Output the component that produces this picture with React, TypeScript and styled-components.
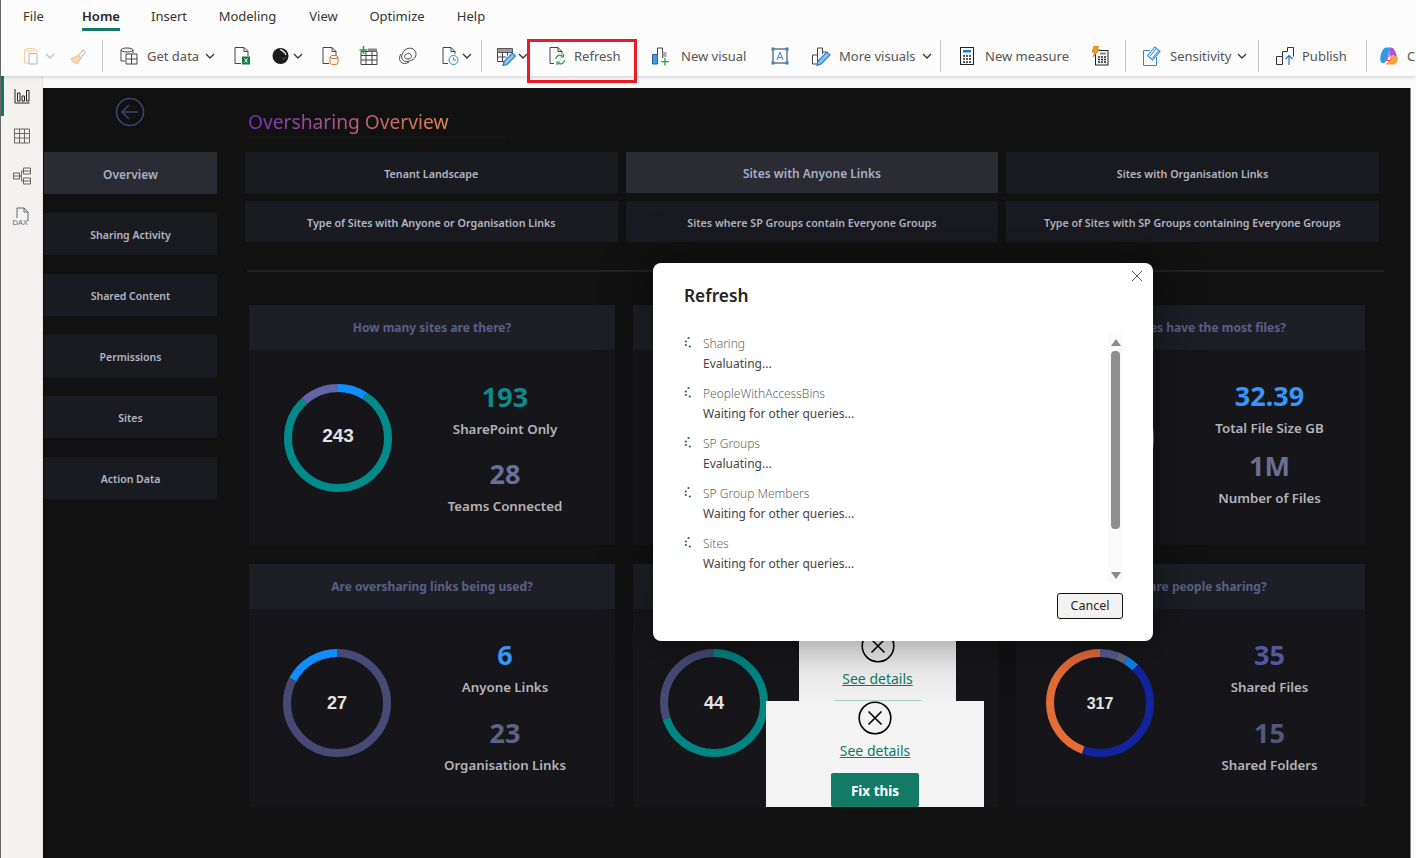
import React from "react";
import styled, { createGlobalStyle } from "styled-components";

const GlobalStyle = createGlobalStyle`
    html, body {
        margin: 0;
        padding: 0;
        background: #fafafa;
        font-family: "Noto Sans", "Open Sans", sans-serif;
    }
`;

/* ---------- ribbon icons ---------- */

const Icon = styled.svg.attrs({ viewBox: "0 0 20 20", fill: "none" })`
    width: 20px;
    height: 20px;
    flex: none;
    stroke: #444;
    stroke-width: 1;
`;

const Chevron = () => (
    <ChevronSvg viewBox="0 0 10 6">
        <path d="M1 1l4 4 4-4" fill="none" stroke="#333" strokeWidth="1.3" />
    </ChevronSvg>
);

const PasteIcon = () => (
    <Icon>
        <path d="M5 4H2.5v13H6M12 4h2.5v2M5 2.5h7V5H5z" stroke="#f2cfa3" />
        <path d="M7 7.5h8v10.5H7z" stroke="#b5b5b5" />
    </Icon>
);
const BrushIcon = () => (
    <Icon>
        <path d="M10 10l5-6 2.5 2-5 6z" stroke="#aaa" />
        <path d="M10 9.5L3 13c1.5 2.5 4 4.5 6 5l4-5.5z" fill="#f6d9b5" stroke="#e9b987" />
    </Icon>
);
const GetDataIcon = () => (
    <Icon>
        <ellipse cx="8" cy="4" rx="6" ry="2" />
        <path d="M2 4v11h4M14 4v3" />
        <path d="M7 8h11v10H7zM7 13h11M12.5 8v10" />
    </Icon>
);
const ExcelIcon = () => (
    <Icon>
        <path d="M3 1.5h9l4 4V10M12 1.5v4h4M3 1.5v16h6" />
        <rect x="10" y="10.5" width="8" height="8" fill="#107c41" stroke="none" />
        <path d="M12.5 12.5l3 4M15.5 12.5l-3 4" stroke="#fff" />
    </Icon>
);
const OneLakeIcon = () => (
    <Icon>
        <circle cx="9.5" cy="10" r="8" fill="#1c1c1c" stroke="none" />
        <path d="M9 3.5c3 .5 5.500 2.500 6 5.500-1.500-2.500-3.500-4-6-5.500z" fill="#fff" stroke="#fff" strokeWidth="0.8" />
        <path d="M11 13c1.500 0 3-.5 4-2" stroke="#777" strokeWidth="0.8" />
    </Icon>
);
const SqlIcon = () => (
    <Icon>
        <path d="M3 1.5h9l4 4V9M12 1.5v4h4M3 1.5v16h6" />
        <ellipse cx="14" cy="11" rx="4" ry="1.6" stroke="#d8731f" />
        <path d="M10 11v6c0 2 8 2 8 0v-6" stroke="#d8731f" />
    </Icon>
);
const EnterDataIcon = () => (
    <Icon>
        <path d="M2 5.5h16v13H2zM2 9.5h16M2 14h16M7 5.5v13M13 5.5v13" />
        <path d="M9 2.5h9v3H9z" fill="#888" stroke="none" />
        <path d="M4.5 0v8M0.5 4h8" stroke="#2e9a4e" strokeWidth="1.6" />
    </Icon>
);
const DataverseIcon = () => (
    <Icon>
        <path d="M7 4c4-3 8-2 10 1s1 7-3 9-7 2-9 0-2-6 2-10z" />
        <path d="M3 8c-2 3-2 6 0 8s5 2 8 0M7 9c2-2 5-2 6 0s0 4-3 4-4-2-3-4z" />
    </Icon>
);
const RecentIcon = () => (
    <Icon>
        <path d="M3 1.5h8l4 4V8M11 1.5v4h4M3 1.5v16h5" />
        <circle cx="13.5" cy="14" r="4.5" stroke="#2b88d8" />
        <path d="M13.5 11.5V14H16" stroke="#2b88d8" />
    </Icon>
);
const TransformIcon = () => (
    <Icon>
        <path d="M1.5 2.5h15v4h-15z" fill="#999" stroke="#555" />
        <path d="M1.5 6.5v9H8M1.5 11h9M6.5 6.5v9M11.5 6.5v3M16.5 6.5v1" />
        <path d="M7 19.5l1-4 8.5-8.5 3 3-8.5 8.5z" fill="#8cc4ee" stroke="#1f78c8" strokeWidth="1.1" />
    </Icon>
);
const RefreshIcon = () => (
    <Icon>
        <path d="M3 1.5h8l4 4V8M11 1.5v4h4M3 1.5v16h4" />
        <path d="M9 13a4 4 0 0 1 7-2.5M17.5 14a4 4 0 0 1-7 2.5" stroke="#2e9a4e" strokeWidth="1.2" />
        <path d="M16.5 8v3h-3M10 19v-3h3" stroke="#2e9a4e" strokeWidth="1.2" />
    </Icon>
);
const NewVisualIcon = () => (
    <Icon>
        <path d="M6.5 18V2h5v10" stroke="#444" />
        <path d="M11.5 6h4v5h-4z" fill="#aaa" stroke="none" />
        <path d="M1.5 8.5h5V18h-5z" fill="#4a9be0" stroke="#1f5fa8" />
        <path d="M14 12v7.5M10.3 15.7h7.5" stroke="#2e9a4e" strokeWidth="1.3" />
    </Icon>
);
const TextBoxIcon = () => (
    <Icon>
        <path d="M3 3h14v14H3z" stroke="#333" />
        <path d="M1.5 1.5h3v3h-3zM15.5 1.5h3v3h-3zM1.5 15.5h3v3h-3zM15.5 15.5h3v3h-3z" fill="#2b88d8" stroke="none" />
        <path d="M7 14l3-8 3 8M8 11.5h4" stroke="#2b88d8" />
    </Icon>
);
const MoreVisualsIcon = () => (
    <Icon>
        <path d="M1.5 9h5v9h-5zM6.5 9V2h5v6M11.5 6h4v3" />
        <path d="M6 19.5l1-4.5 9-9 3 3-9 9z" fill="#8cc4ee" stroke="#1f78c8" strokeWidth="1.1" />
    </Icon>
);
const CalcIcon = () => (
    <Icon>
        <rect x="3.5" y="1.5" width="13" height="17" stroke="#222" />
        <path d="M6 4h8v2.5H6z" fill="#1f78c8" stroke="none" />
        <path d="M6 10h2M9 10h2M12 10h2M6 13h2M9 13h2M12 13h2M6 16h2M9 16h2M12 16h2" stroke="#222" strokeWidth="1.6" />
    </Icon>
);
const QuickMeasureIcon = () => (
    <Icon>
        <rect x="5.5" y="4.5" width="12.5" height="14.5" stroke="#222" />
        <path d="M10 6.5h6v2h-6z" fill="#888" stroke="none" />
        <path d="M8 11h2M11 11h2M14 11h2M8 13.5h2M11 13.5h2M14 13.5h2M8 16h2M11 16h2M14 16h2" stroke="#222" strokeWidth="1.5" />
        <path d="M4 0h5L7 3.500h3L3 11l1.500-5H2z" fill="#f09a28" stroke="#c8701a" strokeWidth="0.6" />
    </Icon>
);
const SensitivityIcon = () => (
    <Icon>
        <path d="M1.5 4.5H8M1.5 4.5v15h13V11" stroke="#2b88d8" />
        <path d="M5.5 9.5L13 1l5 4.5-7.5 8.5z" fill="#fff" stroke="#2b88d8" strokeWidth="1.1" />
        <path d="M8 10l6-7M10.5 12l6-7" stroke="#2b88d8" strokeWidth="1.1" />
    </Icon>
);
const PublishIcon = () => (
    <Icon>
        <path d="M1.5 10.5h6v8h-6zM7.500 10.500V5.500h5M12.500 5.500v-4h6v9" stroke="#333" />
        <path d="M14 19v-9M10.500 13l3.500-3.500 3.500 3.500" stroke="#1f78c8" strokeWidth="1.2" />
    </Icon>
);
const CopilotIcon = () => (
    <Icon>
        <path d="M7 1.5h5L8 13c-.8 2.500-2 4-4 4-1 0-2-.5-2.500-2-.7-3 .5-8 2-10.500C4.500 2.500 5.500 1.500 7 1.500z" fill="#2f9be8" stroke="none" />
        <path d="M11.5 1.5c2 0 3.500 1 4.500 3.500l2.500 7c-1-1.500-2.500-2.500-4.500-2.500H10z" fill="#b14fd8" stroke="none" />
        <path d="M18.5 11c.8 3-.5 7-3.500 7.500H6c1.500-.5 2.500-1.800 3-3.500l1-3c1.500 0 3-.5 3.500-2 2 0 3.500-.5 5 1z" fill="#f6a53a" stroke="none" />
        <path d="M8 9.5h5L11 15H6.500z" fill="#e9487f" stroke="none" />
        <path d="M9.5 10.5H12l-1.300 3.500H8.200z" fill="#fff" stroke="none" />
    </Icon>
);

/* ---------- left rail icons ---------- */

const ReportIcon = () => (
    <Icon>
        <path d="M3 3v14h14.5M5.5 7v8H8V7zM10 10v5h2.5v-5zM14.5 4.5V15H17V4.500z" stroke="#222" />
    </Icon>
);
const TableIcon = () => (
    <Icon>
        <path d="M2.5 3h15v14h-15zM2.500 7.500h15M2.500 12h15M7.500 3v14M12.500 3v14" stroke="#666" />
    </Icon>
);
const ModelIcon = () => (
    <Icon>
        <path d="M1.5 7h6v6h-6zM1.500 10h6M11.500 2h7v6h-7zM11.500 5h7M11.500 12h7v6h-7zM11.500 15h7M7.500 10h2M9.500 5v10M9.500 5h2M9.500 15h2" stroke="#666" />
    </Icon>
);
const DaxIcon = () => (
    <Icon>
        <path d="M5 12V2h7l4 4v9M12 2v4h4" stroke="#666" />
        <text x="0.5" y="18.5" fontSize="7.5" fill="#666" stroke="none" fontFamily="Liberation Sans">DAX</text>
    </Icon>
);

/* ---------- donut ---------- */

type Segment = { size: number; color: string };

function Donut({ total, segments, size = 18, y = 60 }: { total: number; segments: Segment[]; size?: number; y?: number }) {
    let start = 0;
    return (
        <RingSvg viewBox="0 0 108 108">
            <g transform="rotate(-90 54 54)">
                {segments.map((s) => {
                    const arc = (
                        <circle
                            key={s.color}
                            cx="54"
                            cy="54"
                            r="50"
                            fill="none"
                            stroke={s.color}
                            strokeWidth="8"
                            pathLength={100}
                            strokeDasharray={`${s.size} ${100 - s.size}`}
                            strokeDashoffset={-start}
                        />
                    );
                    start += s.size;
                    return arc;
                })}
            </g>
            <RingValue x="54" y={y} textAnchor="middle" $size={size}>
                {total}
            </RingValue>
        </RingSvg>
    );
}

/* ---------- data ---------- */

const ribbonTabs = ["File", "Home", "Insert", "Modeling", "View", "Optimize", "Help"];
const tabWidths = [61, 74, 62, 95, 57, 90, 58];

const sideItems = ["Overview", "Sharing Activity", "Shared Content", "Permissions", "Sites", "Action Data"];

const pageTabs = [
    "Tenant Landscape",
    "Sites with Anyone Links",
    "Sites with Organisation Links",
    "Type of Sites with Anyone or Organisation Links",
    "Sites where SP Groups contain Everyone Groups",
    "Type of Sites with SP Groups containing Everyone Groups",
];

const queries = [
    ["Sharing", "Evaluating..."],
    ["PeopleWithAccessBins", "Waiting for other queries..."],
    ["SP Groups", "Evaluating..."],
    ["SP Group Members", "Waiting for other queries..."],
    ["Sites", "Waiting for other queries..."],
];

const BLUE = "#118dff";
const TEAL = "#008b8b";
const SLATE = "#474a75";

/* ---------- page ---------- */

export default function App() {
    return (
        <Page>
            <GlobalStyle />
            <Ribbon>
                <TabRow>
                    {ribbonTabs.map((t, i) => (
                        <RibbonTab key={t} $active={t === "Home"} style={{ width: tabWidths[i] }}>
                            <span>{t}</span>
                        </RibbonTab>
                    ))}
                </TabRow>
                <Toolbar>
                    <Tool $w={46}><PasteIcon /><FadedChevron><Chevron /></FadedChevron></Tool>
                    <Tool $w={34}><BrushIcon /></Tool>
                    <Sep $after={16} />
                    <Tool $w={113}><GetDataIcon /><ToolLabel>Get data</ToolLabel><Chevron /></Tool>
                    <Tool $w={39}><ExcelIcon /></Tool>
                    <Tool $w={49}><OneLakeIcon /><Chevron /></Tool>
                    <Tool $w={39}><SqlIcon /></Tool>
                    <Tool $w={39}><EnterDataIcon /></Tool>
                    <Tool $w={42}><DataverseIcon /></Tool>
                    <Tool $w={41}><RecentIcon /><Chevron /></Tool>
                    <Sep $after={14} />
                    <Tool $w={31}><TransformIcon /><Chevron /></Tool>
                    <HighlightedTool $w={124}><RefreshIcon /><ToolLabel $gap={7}>Refresh</ToolLabel></HighlightedTool>
                    <Tool $w={119}><NewVisualIcon /><ToolLabel $gap={10}>New visual</ToolLabel></Tool>
                    <Tool $w={41}><TextBoxIcon /></Tool>
                    <Tool $w={129}><MoreVisualsIcon /><ToolLabel>More visuals</ToolLabel><Chevron /></Tool>
                    <Sep $after={16} />
                    <Tool $w={133}><CalcIcon /><ToolLabel>New measure</ToolLabel></Tool>
                    <Tool $w={35}><QuickMeasureIcon /></Tool>
                    <Sep $after={16} />
                    <Tool $w={116}><SensitivityIcon /><ToolLabel>Sensitivity</ToolLabel><Chevron /></Tool>
                    <Sep $after={16} />
                    <Tool $w={91}><PublishIcon /><ToolLabel $gap={7}>Publish</ToolLabel></Tool>
                    <Sep $after={12} />
                    <Tool $w={40}><CopilotIcon /><ToolLabel>C</ToolLabel></Tool>
                </Toolbar>
            </Ribbon>

            <Main>
                <Rail>
                    <RailItem $active><ReportIcon /></RailItem>
                    <RailItem><TableIcon /></RailItem>
                    <RailItem><ModelIcon /></RailItem>
                    <RailItem><DaxIcon /></RailItem>
                </Rail>
                <CanvasArea>
                    <Canvas>
                        <Sidebar>
                            <BackButton viewBox="0 0 30 30">
                                <circle cx="15" cy="15" r="13.5" fill="none" stroke="#3d4370" strokeWidth="1.6" />
                                <path d="M23 15H7M14 8l-7 7 7 7" fill="none" stroke="#3d4370" strokeWidth="1.6" />
                            </BackButton>
                            <SideList>
                                {sideItems.map((s, i) => (
                                    <SideItem key={s} $active={i === 0}>{s}</SideItem>
                                ))}
                            </SideList>
                        </Sidebar>

                        <Content>
                            <Title>Oversharing Overview</Title>
                            <PageTabs>
                                {pageTabs.map((t) => (
                                    <PageTab key={t} $active={t === "Sites with Anyone Links"}>{t}</PageTab>
                                ))}
                            </PageTabs>
                            <Divider />
                            <Cards>
                                <Card>
                                    <CardHead>How many sites are there?</CardHead>
                                    <CardBody $col={146} $height={195}>
                                        <RingSlot $left={35} $top={34}>
                                            <Donut total={243} size={19} y={58} segments={[
                                                { size: 9, color: BLUE },
                                                { size: 79.3, color: TEAL },
                                                { size: 11.7, color: "#6264a7" },
                                            ]} />
                                        </RingSlot>
                                        <Stats $top={28}>
                                            <Stat color="#0d8a8a">193</Stat>
                                            <StatLabel>SharePoint Only</StatLabel>
                                            <Stat color="#6b7099" $gap={16}>28</Stat>
                                            <StatLabel>Teams Connected</StatLabel>
                                        </Stats>
                                    </CardBody>
                                </Card>
                                <Card>
                                    <CardHead />
                                    <CardBody $col={146} $height={195} />
                                </Card>
                                <Card>
                                    <CardHead>Which sites have the most files?</CardHead>
                                    <CardBody $col={158} $height={195}>
                                        <RingSlot $left={30} $top={34}>
                                            <Donut total={32} segments={[{ size: 100, color: "#3a8fe8" }]} />
                                        </RingSlot>
                                        <Stats $top={27}>
                                            <Stat color="#3a96f5">32.39</Stat>
                                            <StatLabel>Total File Size GB</StatLabel>
                                            <Stat color="#6b6f8f" $gap={9}>1M</Stat>
                                            <StatLabel>Number of Files</StatLabel>
                                        </Stats>
                                    </CardBody>
                                </Card>

                                <Card>
                                    <CardHead>Are oversharing links being used?</CardHead>
                                    <CardBody $col={146} $height={198}>
                                        <RingSlot $left={34} $top={40}>
                                            <Donut total={27} segments={[
                                                { size: 82.8, color: SLATE },
                                                { size: 17.2, color: BLUE },
                                            ]} />
                                        </RingSlot>
                                        <Stats $top={27}>
                                            <Stat color="#3a96f5">6</Stat>
                                            <StatLabel>Anyone Links</StatLabel>
                                            <Stat color="#5e6285" $gap={17}>23</Stat>
                                            <StatLabel>Organisation Links</StatLabel>
                                        </Stats>
                                    </CardBody>
                                </Card>
                                <Card>
                                    <CardHead />
                                    <CardBody $col={146} $height={198}>
                                        <RingSlot $left={27} $top={40}>
                                            <Donut total={44} segments={[
                                                { size: 70, color: "#008585" },
                                                { size: 30, color: SLATE },
                                            ]} />
                                        </RingSlot>
                                    </CardBody>
                                    <BackPanel>
                                        <CrossIcon />
                                        <DetailsLink>See details</DetailsLink>
                                        <PanelRule />
                                    </BackPanel>
                                    <FrontPanel>
                                        <CrossIcon />
                                        <DetailsLink>See details</DetailsLink>
                                        <FixButton>Fix this</FixButton>
                                    </FrontPanel>
                                </Card>
                                <Card>
                                    <CardHead>What are people sharing?</CardHead>
                                    <CardBody $col={158} $height={198}>
                                        <RingSlot $left={30} $top={40}>
                                            <Donut total={317} size={16} segments={[
                                                { size: 5.5, color: "#5b5e97" },
                                                { size: 3, color: "#646a85" },
                                                { size: 4, color: "#0d83ea" },
                                                { size: 43, color: "#12239e" },
                                                { size: 44.5, color: "#e66c37" },
                                            ]} />
                                        </RingSlot>
                                        <Stats $top={27}>
                                            <Stat color="#5458a0">35</Stat>
                                            <StatLabel>Shared Files</StatLabel>
                                            <Stat color="#54587f" $gap={17}>15</Stat>
                                            <StatLabel>Shared Folders</StatLabel>
                                        </Stats>
                                    </CardBody>
                                </Card>
                            </Cards>
                        </Content>
                    </Canvas>
                </CanvasArea>
            </Main>

            <Modal>
                <CloseButton viewBox="0 0 12 12">
                    <path d="M1 1l10 10M11 1L1 11" stroke="#555" strokeWidth="1" fill="none" />
                </CloseButton>
                <ModalTitle>Refresh</ModalTitle>
                <ModalBody>
                    <QueryList>
                        {queries.map(([name, status]) => (
                            <Query key={name}>
                                <Spinner viewBox="0 0 10 14">
                                    <circle cx="4.5" cy="2" r="1.1" />
                                    <circle cx="1.8" cy="5.5" r="1.1" />
                                    <circle cx="1.8" cy="9" r="1.1" />
                                    <circle cx="5.8" cy="10.5" r="1.1" />
                                </Spinner>
                                <div>
                                    <QueryName>{name}</QueryName>
                                    <QueryStatus>{status}</QueryStatus>
                                </div>
                            </Query>
                        ))}
                    </QueryList>
                    <ScrollBar>
                        <ScrollArrow viewBox="0 0 10 7"><path d="M5 0l5 7H0z" /></ScrollArrow>
                        <ScrollThumb />
                        <ScrollArrow viewBox="0 0 10 7" $down><path d="M5 7L0 0h10z" /></ScrollArrow>
                    </ScrollBar>
                </ModalBody>
                <ModalFooter>
                    <CancelButton>Cancel</CancelButton>
                </ModalFooter>
            </Modal>
        </Page>
    );
}

const CrossIcon = () => (
    <CrossSvg viewBox="0 0 34 34">
        <circle cx="17" cy="17" r="15.8" fill="none" stroke="#000" strokeWidth="1.6" />
        <path d="M10.5 10.5l13 13M23.5 10.5l-13 13" stroke="#000" strokeWidth="1.6" />
    </CrossSvg>
);

/* ---------- styles ---------- */

const Page = styled.div`
    position: relative;
    width: 1416px;
    height: 858px;
    box-sizing: border-box;
    overflow: hidden;
    display: flex;
    flex-direction: column;
    background: #fafafa;
    border-left: 1px solid #666;
`;

const Ribbon = styled.header`
    position: relative;
    z-index: 2;
    height: 76px;
    background: #fcfcfc;
    box-shadow: 0 1px 4px rgba(0, 0, 0, 0.18);
`;

const TabRow = styled.nav`
    display: flex;
    height: 32px;
    padding-left: 2px;
`;

const RibbonTab = styled.div<{ $active?: boolean }>`
    display: flex;
    justify-content: center;
    font-size: 13px;

    & span {
        height: 31px;
        box-sizing: border-box;
        padding-top: 7px;
        font-weight: ${(p) => (p.$active ? 600 : 400)};
        color: ${(p) => (p.$active ? "#252423" : "#333")};
        border-bottom: 3px solid ${(p) => (p.$active ? "#117865" : "transparent")};
    }
`;

const Toolbar = styled.div`
    display: flex;
    align-items: center;
    box-sizing: border-box;
    height: 44px;
    padding: 4px 0 0 21px;
`;

const Tool = styled.div<{ $w: number }>`
    position: relative;
    flex: none;
    display: flex;
    align-items: center;
    width: ${(p) => p.$w}px;
    height: 32px;
`;

const HighlightedTool = styled(Tool)`
    padding-left: 20px;
    box-sizing: border-box;

    &::after {
        content: "";
        position: absolute;
        left: 0;
        top: -1px;
        width: 110px;
        height: 44px;
        box-sizing: border-box;
        border: 3px solid #ed1c24;
    }
`;

const ToolLabel = styled.span<{ $gap?: number }>`
    margin-left: ${(p) => p.$gap ?? 8}px;
    margin-right: 4px;
    font-size: 13px;
    color: #555;
    white-space: nowrap;
`;

const ChevronSvg = styled.svg`
    width: 10px;
    height: 6px;
    flex: none;
    margin-left: 2px;
`;

const FadedChevron = styled.span`
    display: flex;
    margin-left: 1px;
    opacity: 0.3;
`;

const Sep = styled.div<{ $after: number }>`
    flex: none;
    width: 1px;
    height: 32px;
    background: #c8c6c4;
    margin-right: ${(p) => p.$after}px;
`;

const Main = styled.main`
    flex: 1;
    display: flex;
    min-height: 0;
`;

const Rail = styled.aside`
    flex: none;
    width: 41px;
    background: #f3f2f1;
    border-right: 1px solid #e4e2e0;
`;

const RailItem = styled.div<{ $active?: boolean }>`
    display: flex;
    align-items: center;
    justify-content: center;
    height: 40px;
    box-shadow: ${(p) => (p.$active ? "inset 3px 0 0 #117865" : "none")};
`;

const CanvasArea = styled.div`
    flex: 1;
    padding: 12px 5px 0 0;
    min-width: 0;
`;

const Canvas = styled.div`
    display: flex;
    height: 100%;
    background: #111112;
    border-right: 1px solid #888;
`;

const Sidebar = styled.div`
    flex: none;
    width: 202px;
    padding: 9px 0 0 1px;
    box-sizing: border-box;
`;

const BackButton = styled.svg`
    display: block;
    width: 30px;
    height: 30px;
    margin: 0 0 25px 71px;
`;

const SideList = styled.div`
    display: flex;
    flex-direction: column;
    gap: 19px;
    width: 173px;
`;

const SideItem = styled.div<{ $active?: boolean }>`
    height: 42px;
    box-sizing: border-box;
    padding-top: 2px;
    display: flex;
    align-items: center;
    justify-content: center;
    background: ${(p) => (p.$active ? "#2a2b33" : "#1a1b20")};
    color: ${(p) => (p.$active ? "#a9afc4" : "#b3b6c2")};
    font-size: ${(p) => (p.$active ? 12 : 10.5)}px;
    font-weight: 600;
`;

const Content = styled.div`
    flex: 1;
    min-width: 0;
`;

const Title = styled.h1`
    display: inline-block;
    margin: 19px 0 0 3px;
    height: 29px;
    padding-bottom: 1px;
    width: 258px;
    font-size: 19.2px;
    line-height: 29px;
    font-weight: 400;
    background: linear-gradient(90deg, #7a32b8 0%, #c06478 48%, #e2874a 78%);
    -webkit-background-clip: text;
    background-clip: text;
    color: transparent;
    box-shadow: 0 1px 0 #1b1b1e;
`;

const PageTabs = styled.div`
    display: grid;
    grid-template-columns: repeat(3, 372.6px);
    grid-auto-rows: 41px;
    gap: 8px;
    margin-top: 15px;
`;

const PageTab = styled.div<{ $active?: boolean }>`
    box-sizing: border-box;
    padding-top: 2px;
    display: flex;
    align-items: center;
    justify-content: center;
    background: ${(p) => (p.$active ? "#2a2b33" : "#1a1b20")};
    color: ${(p) => (p.$active ? "#a9afc4" : "#b3b6c2")};
    font-size: ${(p) => (p.$active ? 12 : 10.7)}px;
    font-weight: 600;
`;

const Divider = styled.div`
    height: 2px;
    margin: 28px 0 33px 2px;
    width: 1137px;
    background: #1f2023;
`;

const Cards = styled.div`
    display: grid;
    grid-template-columns: 366px 365px 349px;
    column-gap: 18px;
    row-gap: 19px;
    margin-left: 4px;
`;

const Card = styled.section`
    position: relative;
`;

const CardHead = styled.h2`
    margin: 0;
    height: 45px;
    display: flex;
    align-items: center;
    justify-content: center;
    background: #1e1f26;
    color: #5a5f86;
    font-size: 12px;
    font-weight: 700;
`;

const CardBody = styled.div<{ $col: number; $height: number }>`
    display: grid;
    grid-template-columns: ${(p) => p.$col}px 1fr;
    height: ${(p) => p.$height}px;
    background: #16161a;
`;

const RingSlot = styled.div<{ $left: number; $top: number }>`
    padding: ${(p) => p.$top}px 0 0 ${(p) => p.$left}px;
`;

const RingSvg = styled.svg`
    display: block;
    width: 108px;
    height: 108px;
`;

const RingValue = styled.text<{ $size: number }>`
    font-family: "Liberation Sans", Arial, sans-serif;
    font-size: ${(p) => p.$size}px;
    font-weight: 700;
    fill: #e2e2e2;
`;

const Stats = styled.div<{ $top: number }>`
    display: flex;
    flex-direction: column;
    align-items: center;
    padding-top: ${(p) => p.$top}px;
`;

const Stat = styled.div<{ color: string; $gap?: number }>`
    margin-top: ${(p) => p.$gap ?? 0}px;
    font-size: 27px;
    line-height: 38px;
    font-weight: 700;
    color: ${(p) => p.color};
`;

const StatLabel = styled.div`
    margin-top: 3px;
    font-size: 13.3px;
    line-height: 20px;
    font-weight: 600;
    color: #b4b4b8;
`;

const BackPanel = styled.div`
    position: absolute;
    left: 166px;
    top: 40px;
    width: 157px;
    height: 97px;
    display: flex;
    flex-direction: column;
    align-items: center;
    justify-content: flex-end;
    background: #f0f0f0;
`;

const FrontPanel = styled.div`
    position: absolute;
    left: 133px;
    top: 137px;
    width: 218px;
    height: 106px;
    display: flex;
    flex-direction: column;
    align-items: center;
    background: #f3f3f3;
`;

const CrossSvg = styled.svg`
    display: block;
    width: 34px;
    height: 34px;
    flex: none;
`;

const DetailsLink = styled.a`
    margin-top: 5px;
    font-size: 14px;
    line-height: 21px;
    color: #117865;
    text-decoration: underline;
`;

const PanelRule = styled.div`
    width: 87px;
    height: 1px;
    margin-top: 11px;
    background: #a5d0c3;
`;

const FixButton = styled.button`
    width: 88px;
    height: 34px;
    margin-top: 12px;
    padding: 2px 0 0;
    border: 0;
    border-radius: 2px;
    background: #137a65;
    color: #fff;
    font-family: inherit;
    font-size: 13.5px;
    font-weight: 700;
`;

const Modal = styled.div`
    position: absolute;
    z-index: 3;
    left: 652px;
    top: 263px;
    width: 500px;
    height: 378px;
    box-sizing: border-box;
    padding: 0 30px 0 31px;
    background: #fff;
    border-radius: 8px;
    box-shadow: 0 0 50px rgba(0, 0, 0, 0.45);
`;

const CloseButton = styled.svg`
    position: absolute;
    top: 7px;
    right: 10px;
    width: 12px;
    height: 12px;
`;

const ModalTitle = styled.h3`
    margin: 0;
    padding-top: 19px;
    font-size: 17.3px;
    line-height: 28px;
    font-weight: 600;
    color: #252423;
`;

const ModalBody = styled.div`
    display: flex;
    justify-content: space-between;
    margin-top: 23px;
    height: 250px;
`;

const QueryList = styled.div`
    display: flex;
    flex-direction: column;
    gap: 10px;
`;

const Query = styled.div`
    display: flex;
    height: 40px;
`;

const Spinner = styled.svg`
    flex: none;
    width: 10px;
    height: 14px;
    margin-top: 3px;
    margin-right: 9px;
    fill: #0f6b57;
`;

const QueryName = styled.div`
    font-size: 12px;
    line-height: 21px;
    font-weight: 300;
    color: #666;
`;

const QueryStatus = styled.div`
    font-size: 12px;
    line-height: 20px;
    color: #444;
`;

const ScrollBar = styled.div`
    width: 15px;
    height: 250px;
    display: flex;
    flex-direction: column;
    align-items: center;
    background: #fafafa;
`;

const ScrollArrow = styled.svg<{ $down?: boolean }>`
    display: block;
    flex: none;
    width: 10px;
    height: 7px;
    margin-top: ${(p) => (p.$down ? 43 : 6)}px;
    fill: #8a8a8a;
`;

const ScrollThumb = styled.div`
    flex: none;
    width: 9px;
    height: 178px;
    margin-top: 5px;
    border-radius: 4px;
    background: #8f8f8f;
`;

const ModalFooter = styled.div`
    display: flex;
    justify-content: flex-end;
    margin-top: 10px;
`;

const CancelButton = styled.button`
    width: 66px;
    height: 26px;
    padding: 0 0 2px;
    border: 1px solid #111;
    border-radius: 3px;
    background: #f3f2f1;
    color: #252423;
    font-family: inherit;
    font-size: 12.5px;
`;
